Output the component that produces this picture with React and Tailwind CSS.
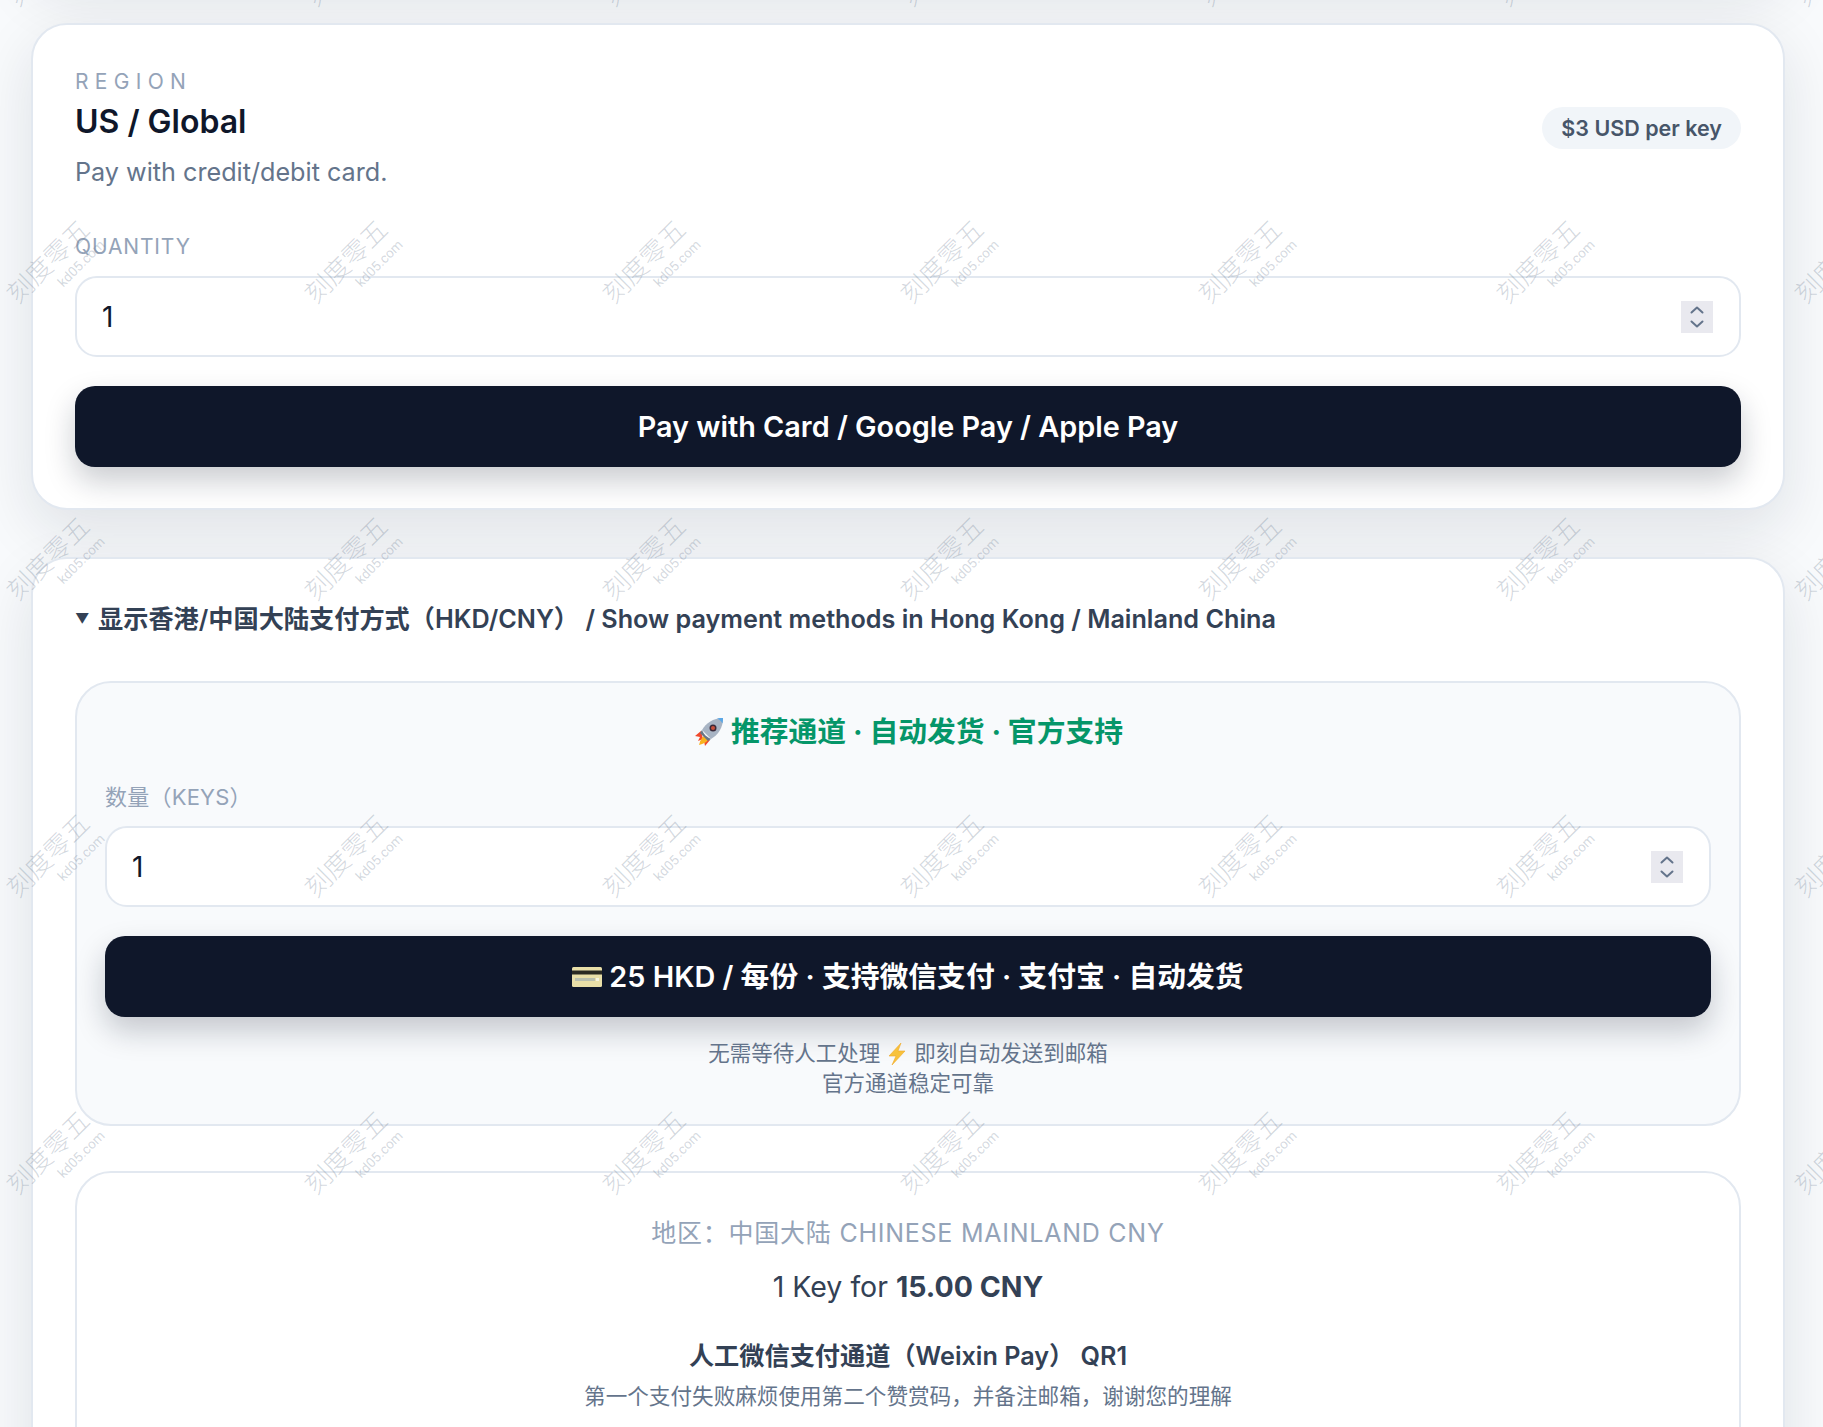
import React from 'react';

const watermarks = Array.from({ length: 35 });

function Watermark() {
  return (
    <div className="absolute -left-[94px] -top-[177px] grid grid-cols-[repeat(7,298px)] auto-rows-[297px] pointer-events-none text-[rgba(100,116,139,0.28)]">
      {watermarks.map((_, i) => (
        <div key={i} className="flex items-center justify-center">
          <div className="-rotate-45 w-[104px] flex flex-col">
            <span className="text-[26px] leading-[26px] font-light whitespace-nowrap">刻度零五</span>
            <span className="mt-[3px] text-[13.5px] leading-[16px] text-right font-[Roboto,sans-serif]">kd05.com</span>
          </div>
        </div>
      ))}
    </div>
  );
}

function QtyInput() {
  return (
    <div className="mt-[15px] h-[81px] rounded-[22px] border-2 border-[#e2e8f0] bg-white pl-[25px] pr-[26px] flex items-center">
      <input readOnly value="1" className="flex-1 min-w-0 bg-transparent outline-none text-[28px] text-[#0f172a]" />
      <div className="w-[32px] h-[32px] bg-[#e9e9ef] flex items-center justify-center">
        <svg width="16" height="26" viewBox="0 0 16 26" fill="none" stroke="#64748b" strokeWidth="2" strokeLinecap="round" strokeLinejoin="round">
          <path d="M2.5 8.5 8 3.5l5.5 5" />
          <path d="M2.5 17.5 8 22.5l5.5-5" />
        </svg>
      </div>
    </div>
  );
}

function PayButton({ children }) {
  return (
    <button className="mt-[29px] w-full h-[81px] rounded-[20px] bg-[#0f172a] text-white text-[28.8px] font-semibold flex items-center justify-center gap-[7px] shadow-[0_14px_30px_rgba(15,23,42,0.22)]">
      {children}
    </button>
  );
}

function RocketIcon() {
  return (
    <svg width="32" height="32" viewBox="0 0 32 32">
      <path d="M8 15 2 20l5 1-2 4 5-2z" fill="#f0492c" />
      <path d="M17 24l-5 6-1-5-4 2 2-5z" fill="#f0492c" />
      <path d="M11 20c-3 2-4 6-5 9 3-1 7-2 9-5z" fill="#f9b21d" />
      <path d="M9 14C13 7 20 2 30 2c0 10-5 17-12 21z" fill="#a8b4c4" />
      <path d="M9 14c2 5 5 7 9 9l-3 2-8-8z" fill="#6a7686" />
      <path d="M24 2.500c2 .5 4 2.500 5.500 5 .4-2 .5-3.500.5-5.500-2 0-4 .1-6 .5z" fill="#5aa7e6" />
      <circle cx="20" cy="12" r="3.500" fill="#3b2a3a" />
      <circle cx="20" cy="12" r="2" fill="#c8503c" />
    </svg>
  );
}

function CardIcon() {
  return (
    <svg width="30" height="24" viewBox="0 0 30 24">
      <rect x="0" y="2" width="30" height="20" rx="1.500" fill="#e9dfa8" />
      <rect x="0" y="5.500" width="30" height="4" fill="#2a2a22" />
      <rect x="3" y="13" width="20" height="3" fill="#b9bfae" />
      <rect x="24" y="13" width="3" height="3" fill="#f5f3e0" />
    </svg>
  );
}

function BoltIcon() {
  return (
    <svg width="20" height="24" viewBox="0 0 20 24" className="inline-block align-[-5px] mx-[7px]">
      <path d="M14 1 2 14h7l-4 9L18 9h-7z" fill="#f7c23c" stroke="#f0a92a" strokeWidth="0.600" strokeLinejoin="round" />
    </svg>
  );
}

export default function App() {
  return (
    <div className="relative h-screen overflow-hidden bg-[#f8fafc] font-[Inter,'Noto_Sans_CJK_SC',sans-serif]">
      <div className="pl-[31px] pr-[38px] flex flex-col gap-[47px] pt-[23px]">
        {/* card above the fold, only its shadow shows */}
        <div className="-mt-[247px] h-[200px] rounded-[36px] bg-white shadow-[0_20px_60px_rgba(15,23,42,0.11)]"></div>

        <section className="rounded-[36px] border-2 border-[#e2e8f0] bg-white px-[42px] pt-[42px] pb-[41px] shadow-[0_20px_60px_rgba(15,23,42,0.11)]">
          <div className="flex items-center justify-between">
            <div>
              <p className="mt-[1px] text-[21px] leading-[28px] tracking-[0.3em] text-[#94a3b8] uppercase">Region</p>
              <h2 className="mt-[7px] text-[32px] leading-[38px] font-semibold text-[#0f172a]">US / Global</h2>
              <p className="mt-[14px] text-[25.2px] leading-[34px] text-[#64748b]">Pay with credit/debit card.</p>
            </div>
            <span className="h-[42px] px-[19px] rounded-full bg-[#f1f5f9] text-[21.5px] font-semibold text-[#475569] flex items-center">$3 USD per key</span>
          </div>
          <label className="block mt-[44px] text-[21px] leading-[28px] tracking-[0.04em] text-[#94a3b8] uppercase">Quantity</label>
          <QtyInput />
          <PayButton>Pay with Card / Google Pay / Apple Pay</PayButton>
        </section>

        <section className="h-[1000px] rounded-[36px] border-2 border-[#e2e8f0] bg-white px-[42px] pt-[43px] shadow-[0_20px_60px_rgba(15,23,42,0.11)]">
          <div className="flex items-center text-[25.2px] leading-[34px] font-semibold text-[#334155]">
            <span className="w-[23px] text-[14px]">▼</span>
            显示香港/中国大陆支付方式（HKD/CNY） / Show payment methods in Hong Kong / Mainland China
          </div>

          <div className="mt-[45px] rounded-[36px] border-2 border-[#e2e8f0] bg-[#f8fafc] px-[28px] pt-[30px] pb-[26px]">
            <div className="flex items-center justify-center gap-[6px] text-[28.8px] leading-[38px] font-bold text-[#059669]">
              <RocketIcon />
              推荐通道 · 自动发货 · 官方支持
            </div>
            <label className="block mt-[32px] text-[22px] leading-[28px] tracking-[0.01em] text-[#94a3b8]">数量（KEYS）</label>
            <QtyInput />
            <PayButton>
              <CardIcon />
              25 HKD / 每份 · 支持微信支付 · 支付宝 · 自动发货
            </PayButton>
            <p className="mt-[21px] text-center text-[21.5px] leading-[30px] text-[#64748b]">
              无需等待人工处理<BoltIcon />即刻自动发送到邮箱
              <br />
              官方通道稳定可靠
            </p>
          </div>

          <div className="mt-[45px] h-[600px] rounded-[36px] border-2 border-[#e2e8f0] bg-white pt-[43px] text-center">
            <p className="text-[25px] leading-[34px] tracking-[0.03em] text-[#94a3b8]">地区：中国大陆 CHINESE MAINLAND CNY</p>
            <p className="mt-[18px] text-[28.5px] leading-[38px] text-[#334155]">1 Key for <strong className="font-bold">15.00 CNY</strong></p>
            <p className="mt-[33px] text-[25.2px] leading-[34px] font-semibold text-[#334155]">人工微信支付通道（Weixin Pay） QR1</p>
            <p className="mt-[8px] text-[21.6px] leading-[30px] text-[#64748b]">第一个支付失败麻烦使用第二个赞赏码，并备注邮箱，谢谢您的理解</p>
          </div>
        </section>
      </div>
      <Watermark />
    </div>
  );
}
